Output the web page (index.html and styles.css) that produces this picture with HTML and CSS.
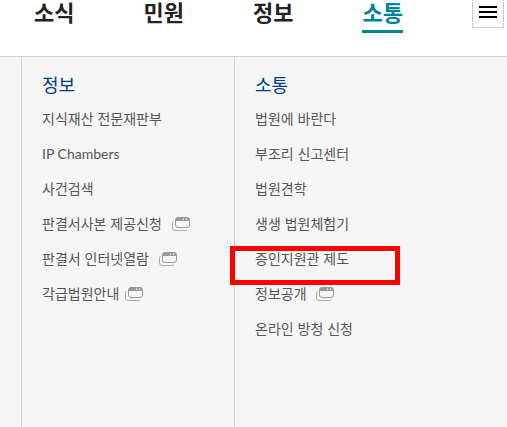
FILE: index.html
```html
<!DOCTYPE html>
<html lang="ko">
<head>
    <meta charset="UTF-8">
    <meta name="viewport" content="width=device-width, initial-scale=1.0">
    <title>소통</title>
    <link rel="stylesheet" href="styles.css">
</head>
<body>
    <!-- Shared icon for links that open a new window -->
    <svg class="sprite" aria-hidden="true">
        <symbol id="newWindow" viewBox="0 0 18 14">
            <path d="M1.5 4C.8 4.600.5 5.200.5 6V11Q.5 13.500 3 13.500H13Q14.600 13.500 15.200 12.500" fill="none" stroke="#aaa"/>
            <rect x="3.500" y=".5" width="14" height="10" rx="2.500" fill="none" stroke="#999"/>
            <path d="M3.500 4V3Q3.500.5 6 .5H15Q17.500.5 17.500 3V4Z" fill="#999"/>
            <path d="M11 1.500h1v1.500h-1zM14 1.500h1v1.500h-1z" fill="#f5f5f5"/>
        </symbol>
    </svg>

    <header class="header">
        <nav class="gnb">
            <a href="#">소식</a>
            <a href="#">민원</a>
            <a href="#">정보</a>
            <a href="#" class="active">소통</a>
        </nav>
        <button type="button" class="menu-btn" aria-label="전체메뉴">
            <span></span>
            <span></span>
            <span></span>
        </button>
    </header>

    <main class="submenu">
        <section class="column">
            <h2>정보</h2>
            <ul>
                <li><a href="#">지식재산 전문재판부</a></li>
                <li><a href="#" class="latin">IP Chambers</a></li>
                <li><a href="#">사건검색</a></li>
                <li><a href="#">판결서사본 제공신청 <svg class="icon"><use href="#newWindow"/></svg></a></li>
                <li><a href="#">판결서 인터넷열람 <svg class="icon"><use href="#newWindow"/></svg></a></li>
                <li><a href="#">각급법원안내<svg class="icon"><use href="#newWindow"/></svg></a></li>
            </ul>
        </section>
        <section class="column">
            <h2>소통</h2>
            <ul>
                <li><a href="#">법원에 바란다</a></li>
                <li><a href="#">부조리 신고센터</a></li>
                <li><a href="#">법원견학</a></li>
                <li><a href="#">생생 법원체험기</a></li>
                <li class="marked"><a href="#">증인지원관 제도</a></li>
                <li><a href="#">정보공개 <svg class="icon"><use href="#newWindow"/></svg></a></li>
                <li><a href="#">온라인 방청 신청</a></li>
            </ul>
        </section>
    </main>
</body>
</html>
```
FILE: styles.css
```css
*,
*::after {
    box-sizing: border-box;
}
body {
    margin: 0;
    min-height: 100vh;
    display: flex;
    flex-direction: column;
    font-family: "Noto Sans CJK KR", sans-serif;
    background: #fff;
}
a {
    color: inherit;
    text-decoration: none;
}
.sprite {
    display: none;
}

/* Top navigation */
.header {
    display: flex;
    justify-content: space-between;
    align-items: flex-start;
    height: 56px;
    padding: 0 3px 0 34px;
}
.gnb {
    display: flex;
    gap: 69px;
}
.gnb a {
    height: 33px;
    font-size: 22px;
    font-weight: 700;
    line-height: 22px;
    color: #222;
}
.gnb .active {
    color: #008299;
    border-bottom: 3px solid #008299;
}
.menu-btn {
    display: flex;
    flex-direction: column;
    gap: 3px;
    width: 32px;
    height: 28px;
    padding: 6px;
    border: 1px solid #ccc;
    border-top: 0;
    background: #fff;
}
.menu-btn span {
    width: 18px;
    height: 2px;
    background: #000;
}

/* Submenu columns */
.submenu {
    flex: 1;
    display: grid;
    grid-template-columns: 213px 1fr;
    padding-left: 21px;
    border-top: 1px solid #d0d0d0;
    background: #f5f5f5;
}
.column {
    padding: 16px 0 0 20px;
    border-left: 1px solid #d0d0d0;
}
.column h2 {
    margin: 0 0 6px;
    font-size: 18px;
    font-weight: 400;
    line-height: 22px;
    color: #003b83;
}
.column ul {
    margin: 0;
    padding: 0;
    list-style: none;
}
.column li {
    position: relative;
    font-size: 14px;
    line-height: 35px;
    color: #555;
}
.column .latin {
    font-family: Lato, sans-serif;
}
.icon {
    width: 18px;
    height: 14px;
    margin-left: 6px;
    vertical-align: -2px;
}

/* Red frame over the marked item */
.marked::after {
    content: "";
    position: absolute;
    top: 5px;
    left: -25px;
    width: 170px;
    height: 39px;
    border: 5px solid #f00;
}
```
